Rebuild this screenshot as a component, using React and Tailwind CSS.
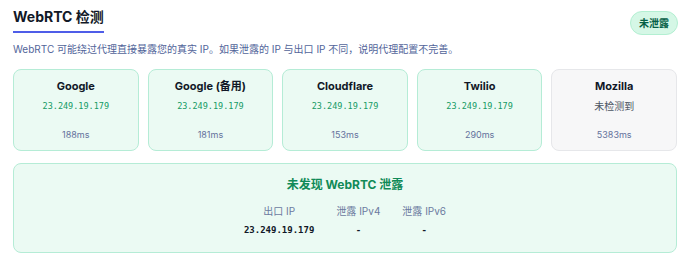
export default function App() {
  const cards = [
    { name: "Google", ip: "23.249.19.179", ms: "188ms", ok: true },
    { name: "Google (备用)", ip: "23.249.19.179", ms: "181ms", ok: true },
    { name: "Cloudflare", ip: "23.249.19.179", ms: "153ms", ok: true },
    { name: "Twilio", ip: "23.249.19.179", ms: "290ms", ok: true },
    { name: "Mozilla", ip: null, ms: "5383ms", ok: false },
  ];
  const sans = { fontFamily: 'Inter, "Noto Sans CJK SC", sans-serif' };
  const mono = { fontFamily: '"DejaVu Sans Mono", "Noto Sans CJK SC", monospace' };
  return (
    <div className="w-[690px] h-[260px] bg-white px-[13px] pt-[8px]" style={sans}>
      <div className="flex items-start justify-between">
        <h1 className="block w-fit text-[14px] leading-[18px] font-bold text-[#111827] pb-[5px] border-b-2 border-[#4f5de8]">
          WebRTC 检测
        </h1>
        <div className="mt-[3px] mr-[-1px] h-[24px] px-[8px] rounded-full bg-[#d5f7e6] border border-[#b3efd2] text-[#065f46] text-[10px] font-bold flex items-center">
          未泄露
        </div>
      </div>
      <p className="mt-[7px] text-[10px] leading-[14px] text-[#52659a]">
        WebRTC 可能绕过代理直接暴露您的真实 IP。如果泄露的 IP 与出口 IP 不同，说明代理配置不完善。
      </p>
      <div className="mt-[13px] grid grid-cols-5 gap-[9px]">
        {cards.map((c) => (
          <div
            key={c.name}
            className={
              "h-[82px] rounded-[8px] border flex flex-col items-center pt-[9px] " +
              (c.ok ? "bg-[#ebfaf3] border-[#b5ecd6]" : "bg-[#f7f7f8] border-[#e6e7ea]")
            }
          >
            <div className="text-[11px] leading-[14px] font-bold text-[#111827]">{c.name}</div>
            {c.ip ? (
              <div className="mt-[6px] text-[8.5px] leading-[14px] text-[#159a65]" style={mono}>
                {c.ip}
              </div>
            ) : (
              <div className="mt-[5px] text-[10px] leading-[16px] text-[#4b5563]">未检测到</div>
            )}
            <div className="mt-auto mb-[9px] text-[9px] leading-[12px] text-[#64719c]">{c.ms}</div>
          </div>
        ))}
      </div>
      <div className="mt-[12px] h-[90px] rounded-[8px] border border-[#b5ecd6] bg-[#ebfaf3] flex flex-col items-center pt-[13px]">
        <div className="text-[12px] leading-[16px] font-bold text-[#108a57]">未发现 WebRTC 泄露</div>
        <table className="mt-[11px] text-center">
          <thead>
            <tr className="text-[10px] leading-[14px] text-[#6b7aa0]">
              <th className="font-normal px-[11px] pb-[5px]">出口 IP</th>
              <th className="font-normal px-[11px] pb-[5px]">泄露 IPv4</th>
              <th className="font-normal px-[11px] pb-[5px]">泄露 IPv6</th>
            </tr>
          </thead>
          <tbody>
            <tr className="text-[9px] leading-[14px] font-bold text-[#111827]" style={mono}>
              <td className="px-[11px]">23.249.19.179</td>
              <td className="px-[11px]">-</td>
              <td className="px-[11px]">-</td>
            </tr>
          </tbody>
        </table>
      </div>
    </div>
  );
}
